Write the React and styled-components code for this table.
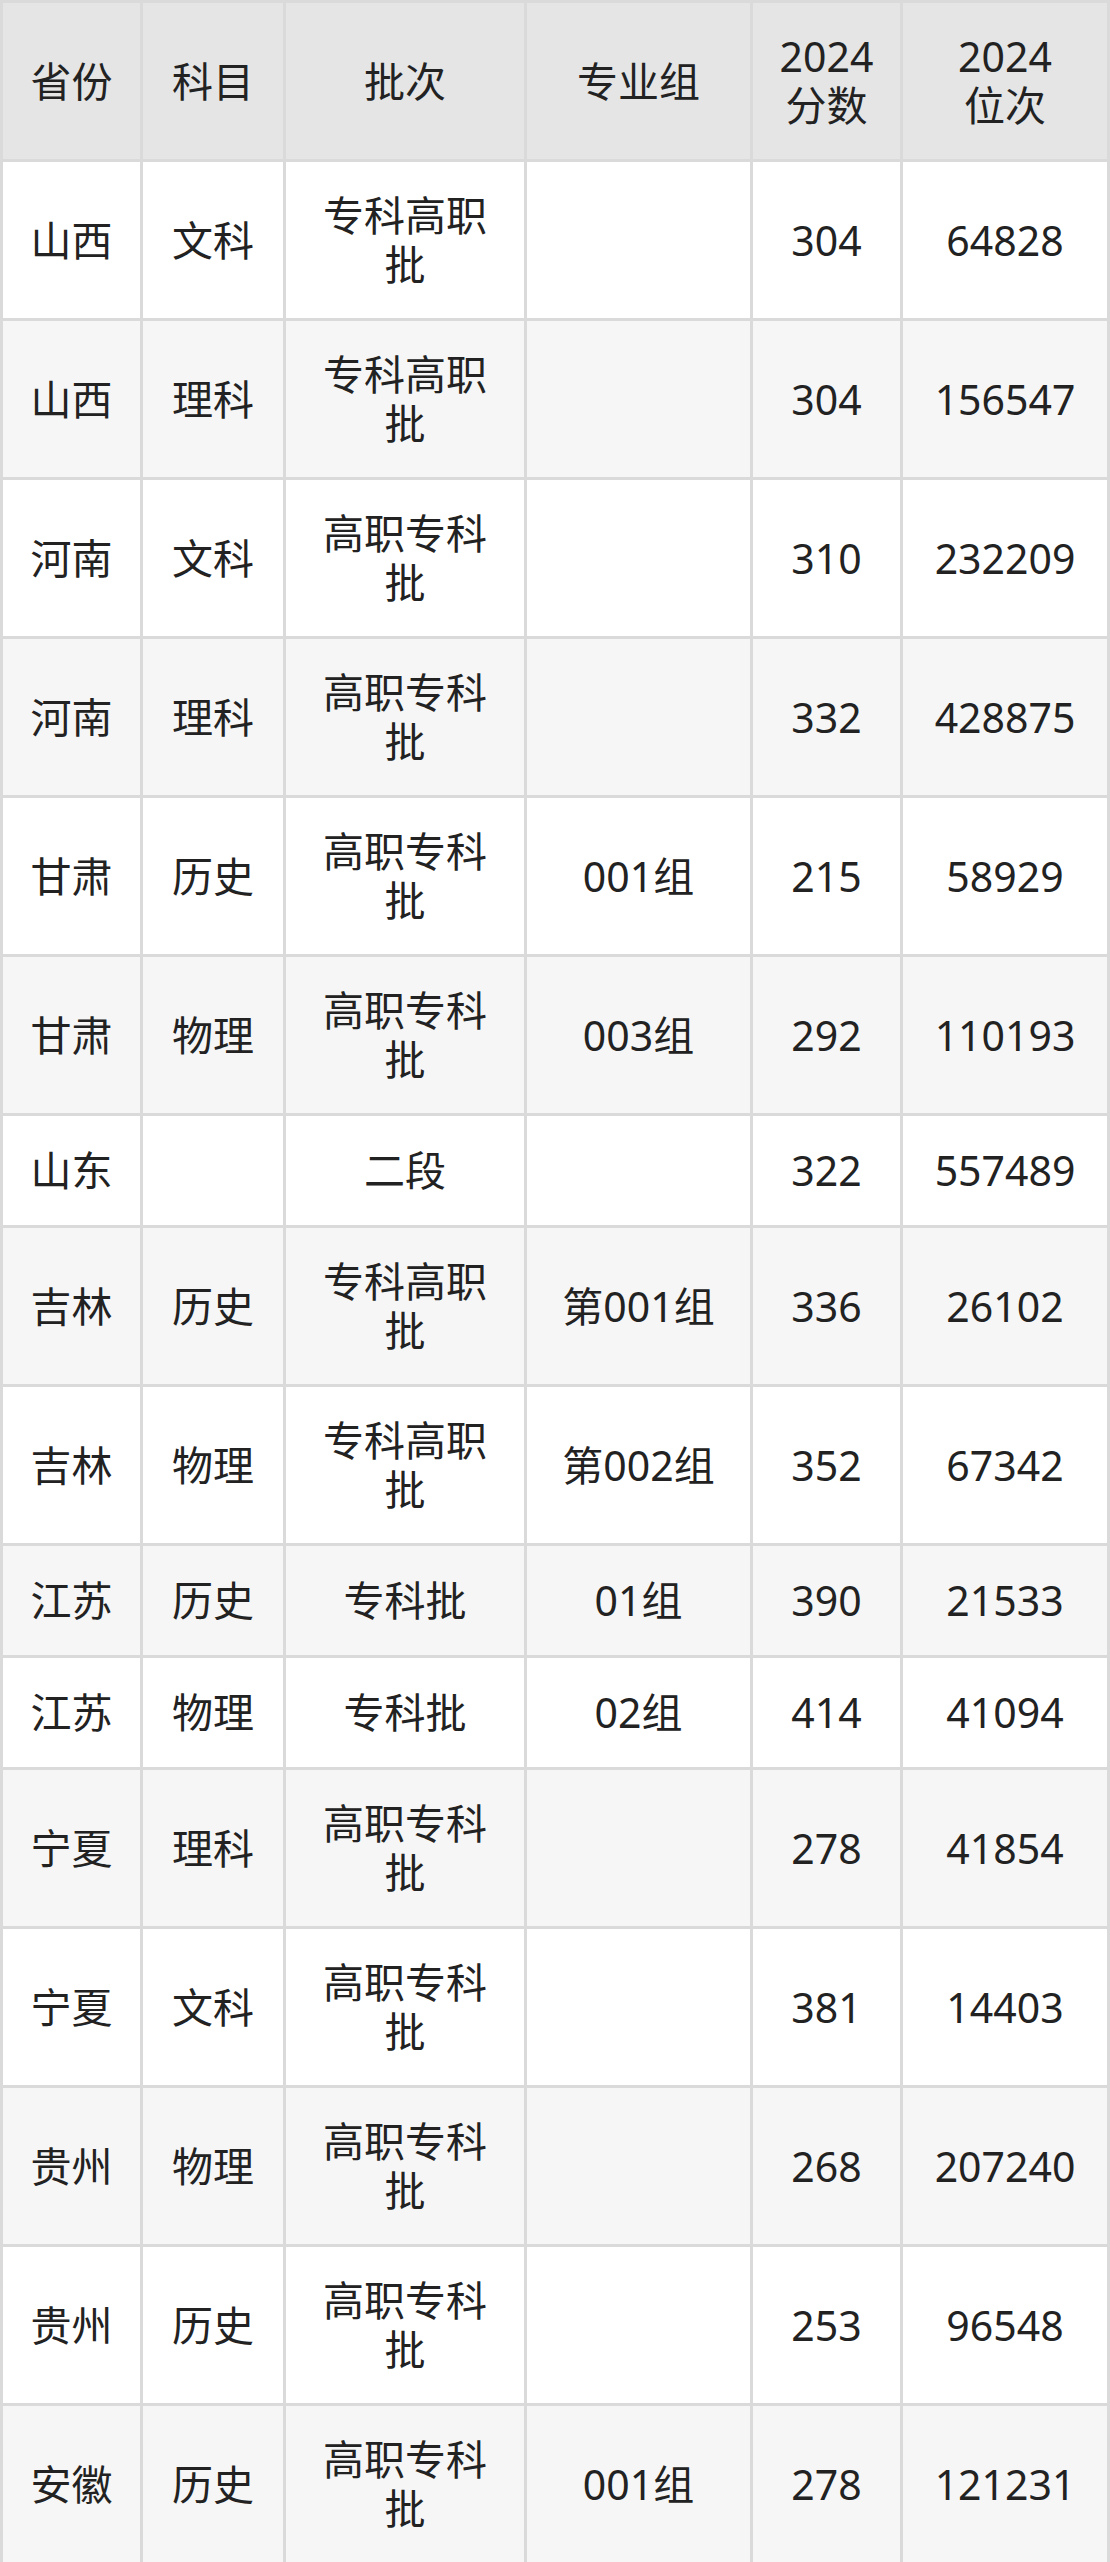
import React from 'react';
import styled, { createGlobalStyle } from 'styled-components';

const GlobalStyle = createGlobalStyle`
  body {
    margin: 0;
    background: #fff;
    font-family: 'Noto Sans', 'Noto Sans CJK SC', sans-serif;
  }
`;

const COLS = '137px 140px 238px 223px 147px 204px';

const headers = ['省份', '科目', '批次', '专业组', '2024\n分数', '2024\n位次'];

const rows = [
  ['山西', '文科', '专科高职批', '', '304', '64828'],
  ['山西', '理科', '专科高职批', '', '304', '156547'],
  ['河南', '文科', '高职专科批', '', '310', '232209'],
  ['河南', '理科', '高职专科批', '', '332', '428875'],
  ['甘肃', '历史', '高职专科批', '001组', '215', '58929'],
  ['甘肃', '物理', '高职专科批', '003组', '292', '110193'],
  ['山东', '', '二段', '', '322', '557489'],
  ['吉林', '历史', '专科高职批', '第001组', '336', '26102'],
  ['吉林', '物理', '专科高职批', '第002组', '352', '67342'],
  ['江苏', '历史', '专科批', '01组', '390', '21533'],
  ['江苏', '物理', '专科批', '02组', '414', '41094'],
  ['宁夏', '理科', '高职专科批', '', '278', '41854'],
  ['宁夏', '文科', '高职专科批', '', '381', '14403'],
  ['贵州', '物理', '高职专科批', '', '268', '207240'],
  ['贵州', '历史', '高职专科批', '', '253', '96548'],
  ['安徽', '历史', '高职专科批', '001组', '278', '121231'],
];

export default function App() {
  return (
    <>
      <GlobalStyle />
      <Table>
        <Row $bg="#e5e5e5" $tall>
          {headers.map(h => (
            <Cell key={h}>
              <Lines>{h}</Lines>
            </Cell>
          ))}
        </Row>
        {rows.map((r, i) => (
          <Row
            key={i}
            $bg={i % 2 === 0 ? '#ffffff' : '#f6f6f6'}
            $tall={r[2].length > 3}
          >
            {r.map((c, j) => (
              <Cell key={j}>{j === 2 ? <Batch>{c}</Batch> : c}</Cell>
            ))}
          </Row>
        ))}
      </Table>
    </>
  );
}

const Table = styled.div`
  width: 1110px;
  box-sizing: border-box;
  display: flex;
  flex-direction: column;
  gap: 3px;
  padding: 3px;
  background: #dadada;
  color: #222;
  font-size: 41px;
  line-height: 49px;
`;

const Row = styled.div`
  display: grid;
  grid-template-columns: ${COLS};
  column-gap: 3px;
  height: ${props => (props.$tall ? '156px' : '109px')};
  > div {
    background: ${props => props.$bg};
  }
`;

const Cell = styled.div`
  display: flex;
  align-items: center;
  justify-content: center;
  text-align: center;
`;

const Lines = styled.span`
  white-space: pre-line;
`;

const Batch = styled.span`
  display: inline-block;
  max-width: 4.2em;
`;
